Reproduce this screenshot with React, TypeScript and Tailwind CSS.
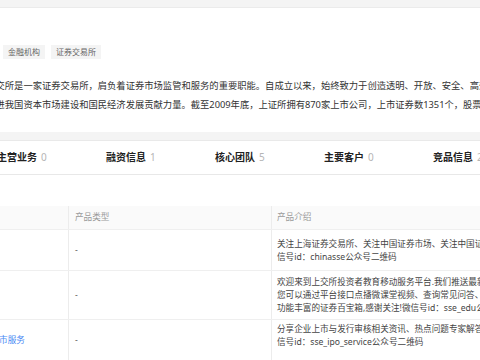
import React from "react";

// tab labels with counts
const tabs = [
  { label: "主营业务", count: 0 },
  { label: "融资信息", count: 1 },
  { label: "核心团队", count: 5 },
  { label: "主要客户", count: 0 },
  { label: "竞品信息", count: 2 },
];

const rows = [
  {
    name: "",
    h: "h-[41px]",
    intro: ["关注上海证券交易所、关注中国证券市场、关注中国证券市场发展", "信号id：chinasse公众号二维码"],
    introCls: "justify-center pt-[2px]",
  },
  {
    name: "",
    h: "h-[49px]",
    intro: [
      "欢迎来到上交所投资者教育移动服务平台.我们推送最新的投资者教育资讯",
      "您可以通过平台接口点播微课堂视频、查询常见问答、参与投教活动",
      "功能丰富的证券百宝箱,感谢关注!微信号id：sse_edu公众号二维码",
    ],
    introCls: "justify-center",
  },
  {
    name: "上市服务",
    h: "h-[42px]",
    intro: ["分享企业上市与发行审核相关资讯、热点问题专家解答、上市服务微", "信号id：sse_ipo_service公众号二维码"],
    introCls: "justify-start pt-[3px]",
  },
];

export default function App() {
  return (
    <div className="w-[480px] h-[360px] overflow-hidden bg-white text-[#333] font-['Noto_Sans','Noto_Sans_CJK_SC',sans-serif]">
      {/* page background strip */}
      <div className="h-[8px] bg-[#f4f4f4] border-b border-[#ebebeb]" />

      {/* company card */}
      <div className="h-[124px] bg-white">
        <div className="flex gap-[6px] pt-[37px] pl-[3px]">
          <span className="h-[14px] px-[5px] bg-[#f4f4f4] text-[#666] text-[8px] leading-[14px]">金融机构</span>
          <span className="h-[14px] px-[5px] bg-[#f4f4f4] text-[#666] text-[8px] leading-[14px]">证券交易所</span>
        </div>
        <div className="mt-[17px] ml-[-4.5px] text-[9.3px] leading-[19px] text-[#333] whitespace-nowrap">
          <p>交所是一家证券交易所，肩负着证券市场监管和服务的重要职能。自成立以来，始终致力于创造透明、开放、安全、高效的市场环境</p>
          <p>进我国资本市场建设和国民经济发展贡献力量。截至2009年底，上证所拥有870家上市公司，上市证券数1351个，股票市值</p>
        </div>
      </div>

      <div className="h-[9px] bg-[#f4f4f4] border-b border-[#e9e9e9]" />

      {/* tabs */}
      <div className="h-[34px] flex items-center ml-[-3px] border-b border-[#e8e8e8] whitespace-nowrap">
        {tabs.map((t) => (
          <div key={t.label} className="w-[109px] shrink-0 flex items-baseline gap-[4px]">
            <span className="text-[10px] font-bold text-[#222]">{t.label}</span>
            <span className="text-[10px] text-[#b5b5b5]">{t.count}</span>
          </div>
        ))}
      </div>

      <div className="h-[31px]" />

      {/* product table */}
      <div className="text-[8.6px] whitespace-nowrap">
        <div className="grid grid-cols-[68px_203px_1fr] h-[24px] bg-[#fafafa] border-b border-[#efefef] text-[#999]">
          <div />
          <div className="border-l border-[#ececec] pl-[6px] flex items-center">产品类型</div>
          <div className="border-l border-[#ececec] pl-[5px] flex items-center">产品介绍</div>
        </div>
        {rows.map((r, i) => (
          <div key={i} className={`grid grid-cols-[68px_203px_1fr] border-b border-[#efefef] ${r.h}`}>
            <div className="flex items-center overflow-hidden">
              {r.name && <span className="ml-[-9.5px] text-[#4a8af4]">{r.name}</span>}
            </div>
            <div className="border-l border-[#ececec] pl-[6px] flex items-center text-[#555]">-</div>
            <div className={`border-l border-[#ececec] pl-[5px] flex flex-col leading-[13px] text-[#444] ${r.introCls}`}>
              {r.intro.map((l) => (
                <span key={l}>{l}</span>
              ))}
            </div>
          </div>
        ))}
      </div>
    </div>
  );
}
